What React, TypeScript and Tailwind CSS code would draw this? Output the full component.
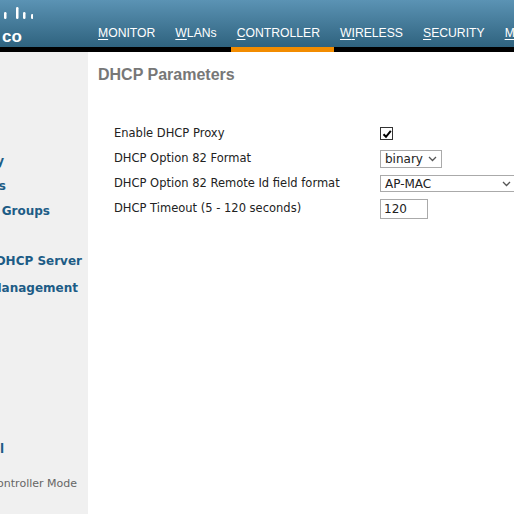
import React from 'react';

const navItems = [
  { first: 'M', rest: 'ONITOR' },
  { first: 'W', rest: 'LANs' },
  { first: 'C', rest: 'ONTROLLER' },
  { first: 'W', mid: 'I', rest: 'RELESS' },
  { first: 'S', rest: 'ECURITY' },
  { first: 'M', rest: 'ANAGEMENT' },
];

const App: React.FC = () => {
  return (
    <div className="w-[514px] h-[514px] overflow-hidden bg-white flex flex-col" style={{ fontFamily: '"DejaVu Sans", sans-serif' }}>
      {/* Header */}
      <div className="h-[47px] shrink-0 bg-gradient-to-b from-[#5b93b4] to-[#2f637f] flex items-end">
        <div className="w-[98px] shrink-0 h-full flex flex-col pl-[3px] pt-[6px]">
          <svg width="30" height="16" viewBox="0 0 30 16">
            <rect x="1" y="6" width="2.5" height="7" rx="1.2" fill="#fff" />
            <rect x="13" y="1" width="2.5" height="12" rx="1.2" fill="#fff" />
            <rect x="20" y="6" width="2.5" height="7" rx="1.2" fill="#fff" />
            <rect x="28" y="8" width="2.5" height="5" rx="1.2" fill="#fff" />
          </svg>
          <span className="text-white font-bold text-[17px] leading-none mt-[6px] -ml-[1px]" style={{ fontFamily: '"Liberation Sans", Arial, sans-serif' }}>co</span>
        </div>
        <div className="flex items-end whitespace-nowrap" style={{ fontFamily: '"Liberation Sans", Arial, sans-serif' }}>
          {navItems.map((n, i) => (
            <div key={i} className="px-[10px] first:pl-0 pb-[5px] text-[12.2px] text-white">
              <span className="underline underline-offset-2">{n.first}</span>
              {n.mid ? <span className="underline underline-offset-2">{n.mid}</span> : null}
              {n.rest}
            </div>
          ))}
        </div>
      </div>
      {/* Tab bar */}
      <div className="h-[5px] shrink-0 bg-black flex">
        <div className="w-[231px]" />
        <div className="w-[103px] bg-[#f28c00]" />
      </div>
      {/* Body */}
      <div className="flex flex-1">
        <div className="w-[88px] shrink-0 bg-[#f0f0f0] overflow-hidden flex flex-col text-[12px] font-bold text-[#1d5c86] whitespace-nowrap">
          <div className="h-[100px]" />
          <div className="flex justify-end pr-[84px] h-[25px]">Inventory</div>
          <div className="flex justify-end pr-[82px] h-[25px]">Interfaces</div>
          <div className="flex justify-end pr-[38px] h-[50px]">Interface Groups</div>
          <div className="flex justify-end pr-[6px] h-[27px]">Internal DHCP Server</div>
          <div className="flex justify-end pr-[10px] h-[161px]">Mobility Management</div>
          <div className="flex justify-end pr-[84px] h-[36px]">Tunnel</div>
          <div className="flex justify-end pr-[11px] font-normal text-[11px] text-[#666]">Controller Mode</div>
        </div>
        <div className="flex-1 pl-[10px] pt-[11px] text-[11.5px] text-[#222]">
          <h1 className="text-[16px] font-bold text-[#777] mb-[34px]" style={{ fontFamily: '"Liberation Sans", Arial, sans-serif' }}>DHCP Parameters</h1>
          <div className="pl-[16px] flex flex-col">
            <div className="flex items-center h-[25px]">
              <span className="w-[266px]">Enable DHCP Proxy</span>
              <span className="w-[13px] h-[13px] border border-[#333] bg-white flex items-center justify-center">
                <svg width="10" height="10" viewBox="0 0 10 10"><path d="M1.5 5.2 L4 7.8 L8.8 1.8" stroke="#000" strokeWidth="2" fill="none" /></svg>
              </span>
            </div>
            <div className="flex items-center h-[25px]">
              <span className="w-[266px]">DHCP Option 82 Format</span>
              <span className="w-[62px] h-[18px] border border-[#aaa] flex items-center justify-between px-[4px] text-[12px]">binary<svg width="9" height="6" viewBox="0 0 9 6"><path d="M1 1 L4.5 4.5 L8 1" stroke="#555" strokeWidth="1.3" fill="none" /></svg></span>
            </div>
            <div className="flex items-center h-[25px]">
              <span className="w-[266px]">DHCP Option 82 Remote Id field format</span>
              <span className="w-[136px] shrink-0 h-[17px] border border-[#aaa] flex items-center justify-between px-[4px] text-[12px]">AP-MAC<svg width="9" height="6" viewBox="0 0 9 6"><path d="M1 1 L4.5 4.5 L8 1" stroke="#555" strokeWidth="1.3" fill="none" /></svg></span>
            </div>
            <div className="flex items-center h-[25px]">
              <span className="w-[266px]">DHCP Timeout (5 - 120 seconds)</span>
              <span className="w-[48px] h-[20px] border border-[#aaa] flex items-center px-[3px] text-[12px]">120</span>
            </div>
          </div>
        </div>
      </div>
    </div>
  );
};

export default App;
